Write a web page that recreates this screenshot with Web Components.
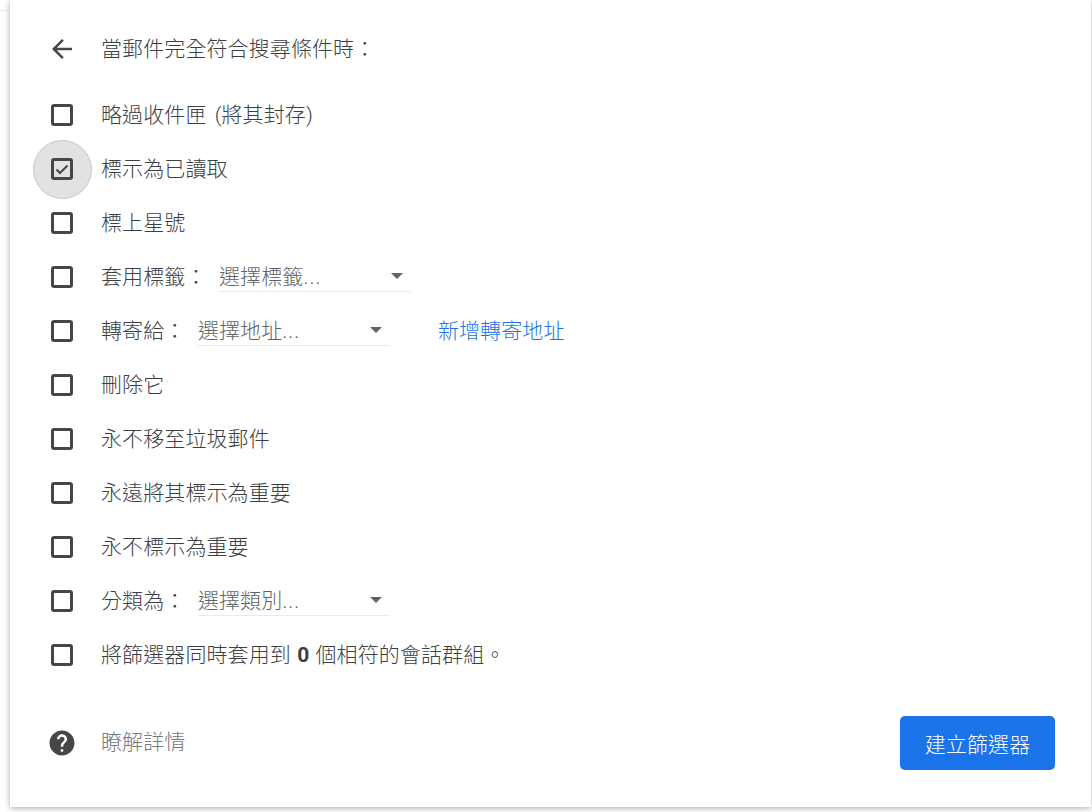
<!DOCTYPE html>
<html lang="zh-Hant">
<head>
<meta charset="utf-8">
<title>篩選器</title>
<style>
  html, body { margin: 0; height: 100%; overflow: hidden; }
  body {
    background: #fff linear-gradient(#ececec, #ececec) 0 10px / 10px 1px no-repeat;
    font-family: Roboto, "Noto Sans CJK TC", sans-serif;
    font-size: 21px;
    letter-spacing: .1px;
    font-weight: 300;
    color: #3c4043;
  }
  b { font-weight: 700; }
  .dots { letter-spacing: 1px; }
</style>
</head>
<body>
<filter-panel>
  <panel-header>當郵件完全符合搜尋條件時：</panel-header>
  <filter-row style="word-spacing: 3px">略過收件匣 (將其封存)</filter-row>
  <filter-row checked>標示為已讀取</filter-row>
  <filter-row>標上星號</filter-row>
  <filter-row>套用標籤：<filter-select slot="control">選擇標籤<span class="dots">...</span></filter-select></filter-row>
  <filter-row>轉寄給：<filter-select slot="control">選擇地址<span class="dots">...</span></filter-select><a slot="control" href="#">新增轉寄地址</a></filter-row>
  <filter-row>刪除它</filter-row>
  <filter-row>永不移至垃圾郵件</filter-row>
  <filter-row>永遠將其標示為重要</filter-row>
  <filter-row>永不標示為重要</filter-row>
  <filter-row>分類為：<filter-select slot="control">選擇類別<span class="dots">...</span></filter-select></filter-row>
  <filter-row style="word-spacing: 1px">將篩選器同時套用到 <b>0</b> 個相符的會話群組。</filter-row>
  <panel-footer slot="footer">瞭解詳情</panel-footer>
</filter-panel>

<script>
// outer card, runs off the top and right of the window
class FilterPanel extends HTMLElement {
  constructor() {
    super();
    this.attachShadow({ mode: 'open' }).innerHTML = `
      <style>
        :host {
          display: flex;
          flex-direction: column;
          isolation: isolate;
          box-sizing: border-box;
          width: 1081px;
          height: 807px;
          margin-left: 10px;
          padding: 26px 36px 0 41px;
          background: #fff;
          box-shadow: 0 1px 6px rgba(60, 64, 67, .45);
        }
      </style>
      <slot></slot>
      <slot name="footer"></slot>
    `;
  }
}

class PanelHeader extends HTMLElement {
  constructor() {
    super();
    this.attachShadow({ mode: 'open' }).innerHTML = `
      <style>
        :host {
          display: flex;
          align-items: center;
          height: 44px;
          margin-bottom: 17px;
        }
        svg { width: 30px; height: 30px; margin: 2px 24px 0 -4px; fill: #444746; flex: none; }
        span { margin-top: -2px; }
      </style>
      <svg viewBox="0 0 24 24"><path d="M20 11H7.83l5.59-5.59L12 4l-8 8 8 8 1.41-1.41L7.83 13H20v-2z"/></svg>
      <span><slot></slot></span>
    `;
  }
}

class FilterRow extends HTMLElement {
  constructor() {
    super();
    this.attachShadow({ mode: 'open' }).innerHTML = `
      <style>
        :host {
          display: flex;
          align-items: center;
          height: 54px;
          white-space: nowrap;
        }
        .box {
          position: relative;
          flex: none;
          box-sizing: border-box;
          width: 22px;
          height: 22px;
          margin: 2px 28px 0 0;
          border: 3px solid #444746;
          border-radius: 3px;
        }
        .box svg { display: none; width: 16px; height: 16px; }
        :host([checked]) .box svg { display: block; }
        /* hover ring around the checked box */
        :host([checked]) .box::before {
          content: "";
          position: absolute;
          z-index: -1;
          left: -21.5px;
          top: -21.5px;
          width: 57px;
          height: 57px;
          border: 1px solid #c4c7ca;
          border-radius: 50%;
          background: #e2e2e2;
        }
        .label { margin-top: -2px; }
        ::slotted(a) {
          margin-left: 48px;
          margin-top: -2px;
          color: #1a73e8;
          text-decoration: none;
        }
      </style>
      <span class="box"><svg viewBox="0 0 16 16"><polyline points="2.5,8.5 6,12 13.5,4.5" fill="none" stroke="#444746" stroke-width="2"/></svg></span>
      <span class="label"><slot></slot></span>
      <slot name="control"></slot>
    `;
  }
}

class FilterSelect extends HTMLElement {
  constructor() {
    super();
    this.attachShadow({ mode: 'open' }).innerHTML = `
      <style>
        :host {
          display: flex;
          align-items: center;
          justify-content: space-between;
          box-sizing: border-box;
          width: 192px;
          height: 30px;
          margin-top: 1px;
          margin-left: 12.5px;
          padding-right: 8px;
          border-bottom: 1px solid #e8eaed;
          color: #5f6368;
        }
        span { margin-top: -2px; }
        i {
          width: 0;
          height: 0;
          border-left: 6px solid transparent;
          border-right: 6px solid transparent;
          border-top: 6px solid #5f6368;
        }
      </style>
      <span><slot></slot></span>
      <i></i>
    `;
  }
}

class PanelFooter extends HTMLElement {
  constructor() {
    super();
    this.attachShadow({ mode: 'open' }).innerHTML = `
      <style>
        :host {
          display: flex;
          align-items: center;
          height: 54px;
          margin-top: 35px;
          color: #757a7f;
        }
        svg { width: 30px; height: 30px; margin-left: -4px; margin-right: 24px; fill: #444746; flex: none; }
        span { flex: 1; margin-top: -6px; }
        button {
          width: 155px;
          height: 54px;
          border: 0;
          border-radius: 5px;
          background: #1a73e8;
          color: #fff;
          font: inherit;
          letter-spacing: inherit;
        }
      </style>
      <svg viewBox="0 0 24 24"><path d="M12 2C6.48 2 2 6.48 2 12s4.48 10 10 10 10-4.48 10-10S17.52 2 12 2zm1 17h-2v-2h2v2zm2.07-7.75l-.9.92C13.45 12.9 13 13.5 13 15h-2v-.5c0-1.1.45-2.1 1.17-2.83l1.24-1.26c.37-.36.59-.86.59-1.41 0-1.1-.9-2-2-2s-2 .9-2 2H8c0-2.21 1.79-4 4-4s4 1.79 4 4c0 .88-.36 1.68-.93 2.25z"/></svg>
      <span><slot></slot></span>
      <button>建立篩選器</button>
    `;
  }
}

customElements.define('filter-panel', FilterPanel);
customElements.define('panel-header', PanelHeader);
customElements.define('filter-row', FilterRow);
customElements.define('filter-select', FilterSelect);
customElements.define('panel-footer', PanelFooter);
</script>
</body>
</html>
